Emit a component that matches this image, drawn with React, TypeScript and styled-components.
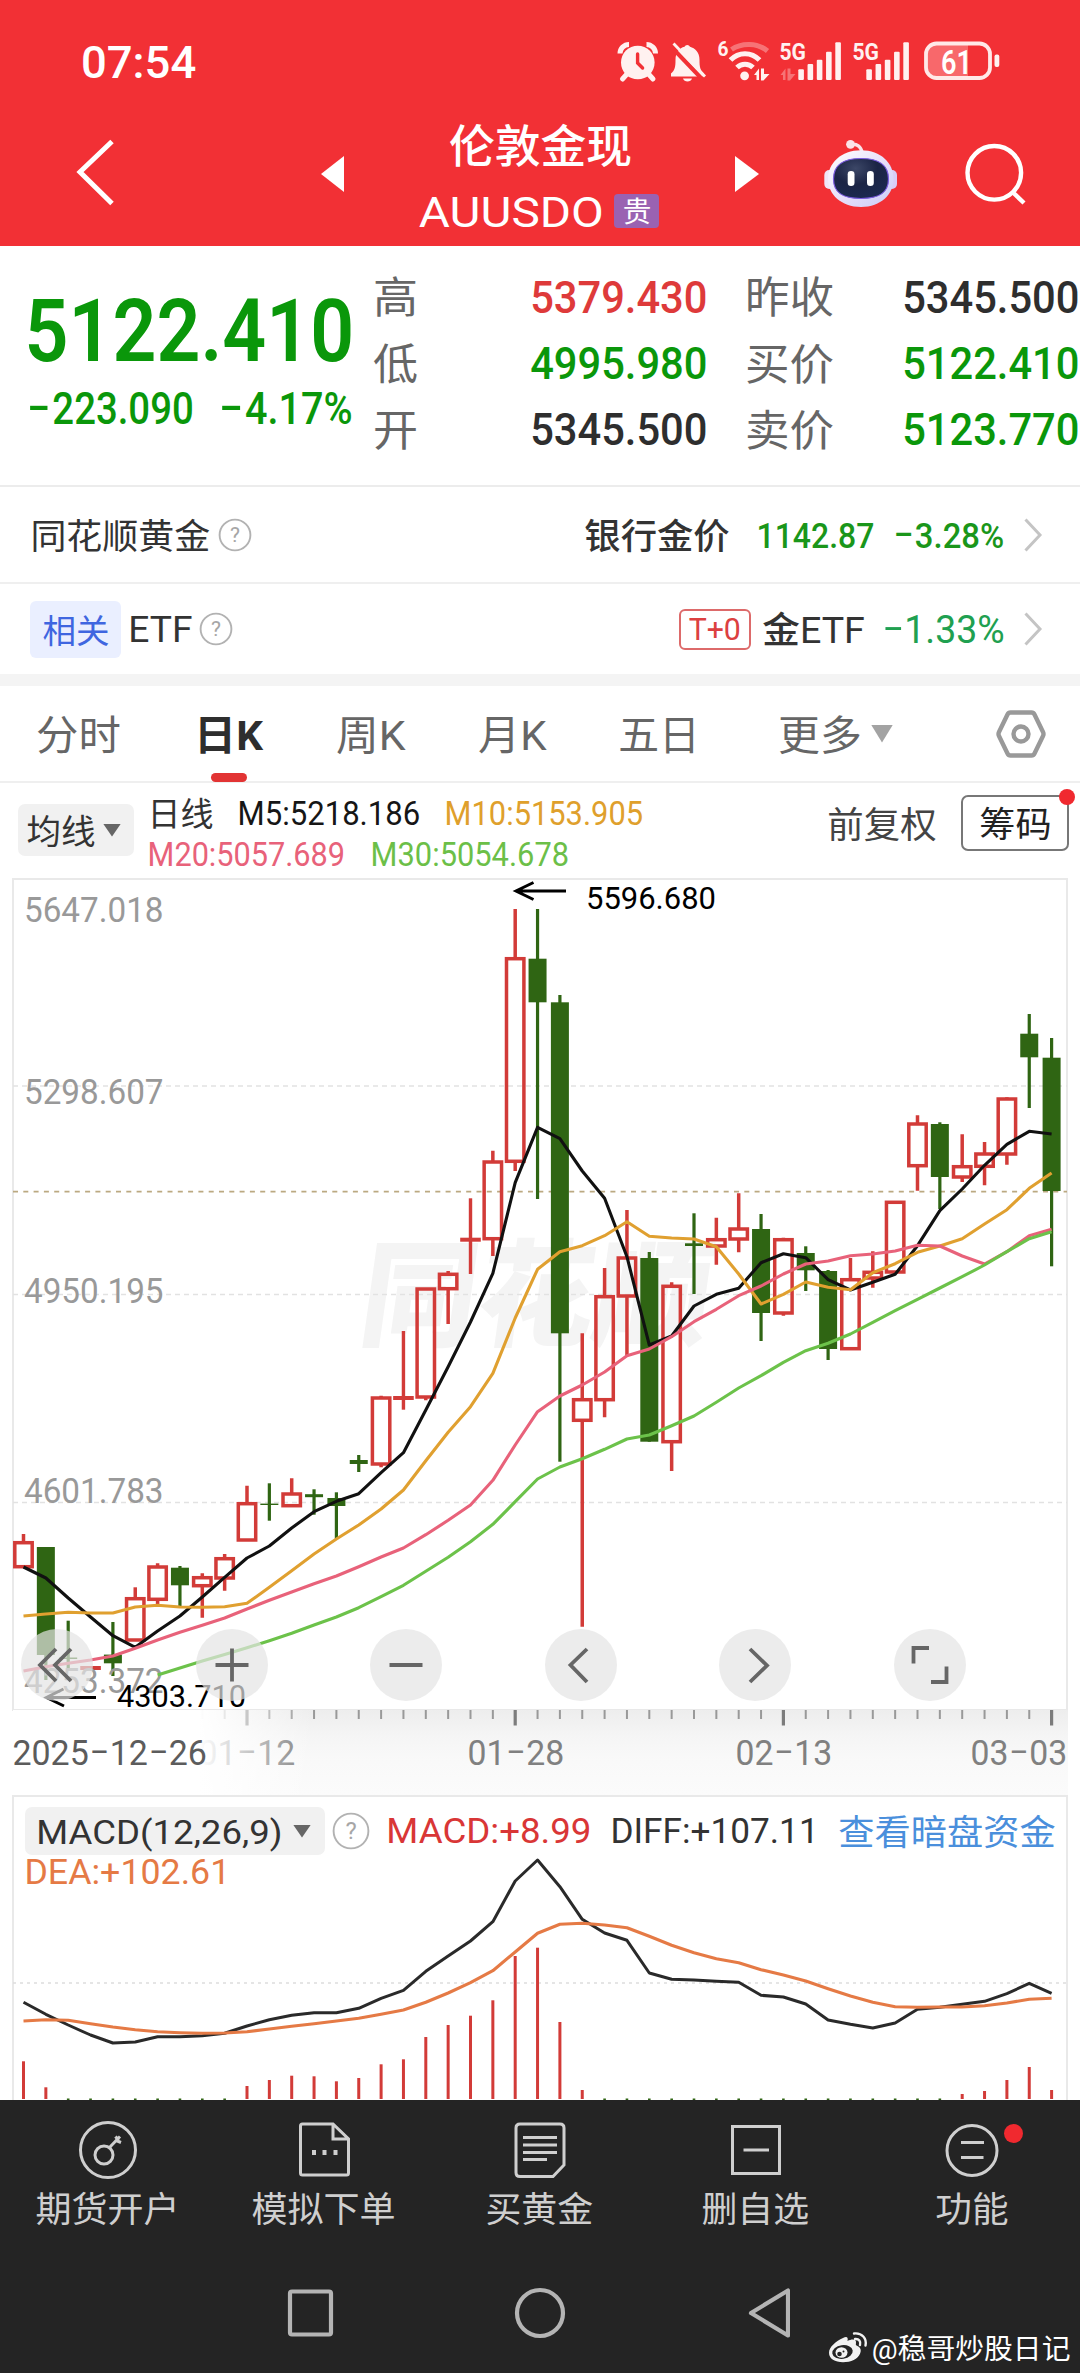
import React, { useLayoutEffect, useRef, useState } from "react";
import styled, { createGlobalStyle, css } from "styled-components";

const GlobalStyle = createGlobalStyle`
  *, *::before, *::after { box-sizing: border-box; }
  body {
    margin: 0;
    background: #ffffff;
    font-family: Roboto, "Noto Sans CJK SC", sans-serif;
  }
  svg { display: block; flex: none; }
`;

/* ---------- text fitted to a fixed ink width ---------- */

const FitBox = styled.span<{ $w: number; $ml?: number; $lh: number }>`
  display: block;
  flex: none;
  position: relative;
  width: ${(p) => p.$w}px;
  margin-left: ${(p) => p.$ml ?? 0}px;
  height: ${(p) => p.$lh}px;
  white-space: nowrap;
`;

const FitInner = styled.span<{ $size: number; $weight: number; $color: string; $lh: number }>`
  display: inline-block;
  transform-origin: 0 50%;
  font-size: ${(p) => p.$size}px;
  font-weight: ${(p) => p.$weight};
  color: ${(p) => p.$color};
  line-height: ${(p) => p.$lh}px;
`;

const Dash = styled.span`
  display: inline-block;
  transform: translateY(-0.06em) scaleX(1.75);
  margin: 0 0.17em;
`;

type FitProps = {
  text: string;
  w: number;
  size: number;
  weight?: number;
  color?: string;
  ml?: number;
  lh?: number;
};

function Fit({ text, w, size, weight = 400, color = "#333333", ml, lh }: FitProps) {
  const ref = useRef<HTMLSpanElement>(null);
  const [scale, setScale] = useState(1);
  const bearing = size * 0.045;
  const drop = /[\u4e00-\u9fff]/.test(text) ? 1.5 : 0.5;
  useLayoutEffect(() => {
    if (ref.current) setScale(w / (ref.current.offsetWidth - bearing * 2));
  }, [w, bearing, text]);
  const height = lh ?? Math.round(size * 1.3);
  return (
    <FitBox $w={w} $ml={ml} $lh={height}>
      <FitInner
        ref={ref}
        $size={size}
        $weight={weight}
        $color={color}
        $lh={height}
        style={{ transform: `translate(${-bearing * scale}px, ${drop}px) scaleX(${scale})` }}
      >
        {text.split("-").map((part, i) => (
          <React.Fragment key={i}>
            {i > 0 && <Dash>-</Dash>}
            {part}
          </React.Fragment>
        ))}
      </FitInner>
    </FitBox>
  );
}

/* ---------- layout parts ---------- */

const Screen = styled.main`
  width: 1080px;
  height: 2373px;
  overflow: hidden;
  background: #ffffff;
  display: flex;
  flex-direction: column;
`;

const Header = styled.header`
  height: 246px;
  flex: none;
  background: #f23035;
`;

const StatusBar = styled.div`
  height: 122px;
  display: flex;
  align-items: center;
  padding-left: 83px;
`;

const TitleBar = styled.div`
  height: 104px;
  display: flex;
  align-items: center;
  padding-left: 75px;
`;

const Slot = styled.div<{ $ml?: number }>`
  flex: none;
  margin-left: ${(p) => p.$ml ?? 0}px;
`;

const TitleBlock = styled.div`
  flex: none;
  width: 238px;
  margin: 8px 0 0 77px;
  display: flex;
  flex-direction: column;
  align-items: center;
`;

const TitleLine = styled.div`
  height: 66px;
  display: flex;
  align-items: center;
`;

const KindBadge = styled.span`
  margin-left: 12px;
  width: 45px;
  height: 34px;
  border-radius: 4px;
  background: #9a62b2;
  display: flex;
  align-items: center;
  justify-content: center;
`;

const Quote = styled.section`
  height: 241px;
  flex: none;
  display: flex;
  padding: 17px 0 0 28px;
  border-bottom: 2px solid #ececec;
`;

const PriceBlock = styled.div`
  width: 323px;
  flex: none;
  padding-top: 21px;
`;

const Line = styled.div`
  display: flex;
  align-items: center;
`;

const QuoteTable = styled.div`
  margin-left: 24px;
  display: grid;
  grid-auto-rows: 66.4px;
`;

const LinkRow = styled.div<{ $h: number; $border?: boolean }>`
  height: ${(p) => p.$h}px;
  flex: none;
  display: flex;
  align-items: center;
  padding: 0 37px 0 32px;
  ${(p) => p.$border && css`border-bottom: 2px solid #efefef;`}
`;

const Spacer = styled.span`
  flex: 1;
`;

const RelatedTag = styled.span`
  width: 91px;
  height: 57px;
  margin-left: -2px;
  border-radius: 6px;
  background: #eaefff;
  display: flex;
  align-items: center;
  justify-content: center;
`;

const T0Tag = styled.span`
  width: 72px;
  height: 41px;
  border: 2px solid #dd6a6a;
  border-radius: 6px;
  display: flex;
  align-items: center;
  justify-content: center;
`;

const Divider = styled.div`
  height: 12px;
  flex: none;
  background: #f4f4f4;
`;

const Tabs = styled.nav`
  height: 97px;
  flex: none;
  display: flex;
  padding-left: 38px;
  border-bottom: 2px solid #efefef;
`;

const Tab = styled.div<{ $ml?: number }>`
  margin-left: ${(p) => p.$ml ?? 0}px;
  height: 96px;
  display: flex;
  flex-direction: column;
  align-items: center;
  flex: none;
`;

const TabMark = styled.span`
  width: 36px;
  height: 9px;
  margin-top: -10px;
  border-radius: 5px;
  background: #e23434;
`;

const Triangle = styled.i<{ $w: number; $h: number; $color: string; $ml: number }>`
  flex: none;
  margin-left: ${(p) => p.$ml}px;
  width: ${(p) => p.$w}px;
  height: ${(p) => p.$h}px;
  background: ${(p) => p.$color};
  clip-path: polygon(0 0, 100% 0, 50% 100%);
`;

const MaBar = styled.div`
  height: 95px;
  flex: none;
  display: flex;
  padding-left: 18px;
`;

const PickButton = styled.div<{ $w: number; $h: number; $pad: number; $mt: number }>`
  width: ${(p) => p.$w}px;
  height: ${(p) => p.$h}px;
  margin-top: ${(p) => p.$mt}px;
  padding-left: ${(p) => p.$pad}px;
  border-radius: 7px;
  background: #f1f1f1;
  display: flex;
  align-items: center;
  flex: none;
`;

const MaLegend = styled.div`
  margin: 9px 0 0 15px;
  width: 494px;
  flex: none;
`;

const ChipButton = styled.div`
  position: relative;
  margin: 12px 0 0 26px;
  width: 108px;
  height: 56px;
  border: 2px solid #777777;
  border-radius: 7px;
  display: flex;
  align-items: center;
  justify-content: center;
`;

const RedDot = styled.i<{ $size: number; $top: number; $right: number }>`
  position: absolute;
  top: ${(p) => p.$top}px;
  right: ${(p) => p.$right}px;
  width: ${(p) => p.$size}px;
  height: ${(p) => p.$size}px;
  border-radius: 50%;
  background: #f0292f;
`;

const ChartArea = styled.section`
  position: relative;
  height: 832px;
  flex: none;
`;

const ControlRow = styled.div`
  position: absolute;
  left: 21px;
  bottom: 9px;
  display: flex;
  gap: 102.5px;
`;

const RoundButton = styled.button`
  width: 72px;
  height: 72px;
  padding: 0;
  border: 0;
  border-radius: 50%;
  background: rgba(228, 228, 228, 0.7);
  display: flex;
  align-items: center;
  justify-content: center;
`;

const Axis = styled.div`
  position: relative;
  height: 85px;
  width: 1055px;
  margin-left: 13px;
  flex: none;
  background: linear-gradient(#ededed, #f5f5f5 30%, #f9f9f9 60%, #fbfbfb);
`;

const AxisFade = styled.div`
  position: absolute;
  inset: 0 auto 0 0;
  width: 300px;
  background: linear-gradient(90deg, #fff 62%, rgba(255, 255, 255, 0));
`;

const DateRow = styled.div`
  height: 48px;
  display: flex;
  align-items: center;
  padding-left: 1px;
`;

const DateStart = styled.div`
  position: relative;
  z-index: 1;
`;

const MacdPanel = styled.section`
  position: relative;
  height: 305px;
  flex: none;
  overflow: hidden;
`;

const MacdCanvas = styled.svg`
  position: absolute;
  inset: 0;
`;

const MacdLegend = styled.div`
  position: relative;
  padding: 12px 0 0 25px;
`;

const MacdRow = styled.div`
  height: 48px;
  display: flex;
  align-items: center;
`;

const BottomBar = styled.footer`
  flex: 1;
  position: relative;
  background: #242424;
`;

const BottomTabs = styled.div`
  display: grid;
  grid-template-columns: repeat(5, 216px);
`;

const BottomTab = styled.div`
  position: relative;
  display: flex;
  flex-direction: column;
  align-items: center;
  padding: 20px 1px 0 0;
  gap: 3px;
`;

const SystemNav = styled.div`
  display: flex;
  justify-content: center;
  padding: 54px 4px 0 0;
`;

const Credit = styled.div`
  position: absolute;
  left: 828px;
  bottom: 7px;
  display: flex;
  align-items: center;
`;

/* ---------- icons ---------- */

const Bars = ({ x }: { x: number }) => (
  <g>
    {[69.3, 64, 59.7, 51.7, 42.3].map((top, i) => (
      <rect key={i} x={x + i * 9.25} y={top} width={5.6} height={80 - top} rx={1} />
    ))}
  </g>
);

const StatusIcons = () => (
  <svg width="392" height="46" viewBox="615 38 392 46" fill="#fff1f0">
    <circle cx="637.8" cy="62.5" r="16.8" />
    <path d="M620 53.5a9 9 0 0 1 9-9M646.500 44.500a9 9 0 0 1 9 9" fill="none" stroke="#fff1f0" strokeWidth="5" />
    <path d="M627 74l-4.500 5M648.500 74l4.500 5" stroke="#fff1f0" strokeWidth="5" strokeLinecap="round" />
    <path d="M637.600 54v9l5 5" fill="none" stroke="#f23035" strokeWidth="3.4" strokeLinecap="round" />
    <path d="M671 76.500v-3c4-3 4.500-7 4.500-13.500 0-8 4-12 9-13.300a3 3 0 0 1 5.500 0c5 1.300 9.500 5.500 9.500 13.300 0 6.500.5 10.500 4.500 13.500v3z" />
    <path d="M683 78.500h9c-1 4-8 4-9 0z" />
    <path d="M670.500 46L702 79" stroke="#f23035" strokeWidth="4" />
    <path d="M673.500 43.500L705 76.500" stroke="#fff1f0" strokeWidth="2.800" />
    <text x="717.500" y="56" fontSize="21" fontWeight="700" textLength="11" lengthAdjust="spacingAndGlyphs">6</text>
    <g fill="none" stroke="#fff1f0" strokeWidth="5">
      <path d="M731.500 49.500c10-7 26-7 36 1.500" opacity=".35" />
      <path d="M730.500 60c8-8.500 21-8.500 29 0" />
      <path d="M737 67.500c4.500-4.500 11.500-4.500 16 0" />
    </g>
    <circle cx="744.6" cy="75.800" r="4.400" />
    <path d="M754 75l5-6.500v11.500h-2.500V75zM761 68.500h3V74h5.500l-6 6.500H761z" />
    <text x="779.500" y="60" fontSize="24" fontWeight="700" textLength="26.500" lengthAdjust="spacingAndGlyphs">5G</text>
    <path d="M780.500 75l5-6.500v11.500H783V75zM787.500 68.500h3V74h5l-5.500 6.500h-2.500z" opacity=".35" />
    <Bars x={798.3} />
    <text x="852.500" y="60" fontSize="24" fontWeight="700" textLength="26.500" lengthAdjust="spacingAndGlyphs">5G</text>
    <Bars x={866.3} />
    <path d="M936 43h32v35h-32a10 10 0 0 1-10-10V53a10 10 0 0 1 10-10z" fill="#f8686b" />
    <rect x="926" y="43.500" width="64" height="34.500" rx="10.500" fill="none" stroke="#ffe9e8" strokeWidth="3.800" />
    <rect x="994.500" y="54.500" width="4.800" height="12.500" rx="2" />
    <text x="941" y="73.500" fontSize="34" fontWeight="600" fill="#fff" textLength="31" lengthAdjust="spacingAndGlyphs">61</text>
  </svg>
);

const Robot = () => (
  <svg width="78" height="74" viewBox="822 135 78 74">
    <defs>
      <linearGradient id="shell" x1="0" y1="0" x2="1" y2="1">
        <stop offset="0" stopColor="#ffffff" />
        <stop offset=".55" stopColor="#e6defa" />
        <stop offset="1" stopColor="#c9cdf8" />
      </linearGradient>
      <radialGradient id="visor" cx=".4" cy=".25" r=".8">
        <stop offset="0" stopColor="#3c4767" />
        <stop offset=".5" stopColor="#1b2445" />
        <stop offset="1" stopColor="#1c2a50" />
      </radialGradient>
    </defs>
    <path d="M851 142.500c6-1 10 2 11 8" fill="none" stroke="#fbe3e8" strokeWidth="3.400" />
    <circle cx="850.5" cy="142.300" r="4.400" fill="#fbe3e8" />
    <rect x="824.300" y="168" width="10" height="19" rx="5" fill="#efe6f8" />
    <rect x="886.500" y="168" width="10.500" height="19" rx="5" fill="#d9cdf6" />
    <path d="M861 148.300c20 0 32.500 13 32.500 28.500S881 205 861 205s-33-12.700-33-28.200 13-28.500 33-28.500z" fill="url(#shell)" />
    <path d="M861 156.500c17 0 27.500 5.500 27.500 20.500 0 14-9.500 19.500-27.500 19.500S833.500 191 833.500 177c0-15 10.500-20.500 27.500-20.500z" fill="url(#visor)" stroke="#7b5be0" strokeWidth="1.200" />
    <rect x="847.700" y="169" width="6.800" height="15" rx="3.300" fill="#fff" />
    <rect x="867" y="169" width="6.800" height="15" rx="3.300" fill="#fff" />
  </svg>
);

const Help = ({ r, ml }: { r: number; ml: number }) => (
  <Slot $ml={ml}>
    <svg width={r * 2 + 2} height={r * 2 + 2} viewBox={`${-r - 1} ${-r - 1} ${r * 2 + 2} ${r * 2 + 2}`}>
      <circle r={r - 0.6} fill="none" stroke="#b2b2b2" strokeWidth="1.900" />
      <text y={r * 0.46} fontSize={r * 1.32} fill="#a6a6a6" textAnchor="middle">?</text>
    </svg>
  </Slot>
);

const Chevron = () => (
  <Slot $ml={20}>
    <svg width="20" height="36" viewBox="0 0 20 36">
      <path d="M2.500 2.500L17 18 2.500 33.500" fill="none" stroke="#c4c4c4" strokeWidth="3" />
    </svg>
  </Slot>
);

/* ---------- chart data (pixel rows of the 832px-high plot, top at 878) ---------- */

type Candle = [kind: "r" | "g", high: number, top: number, bottom: number, low: number];

const candles: Candle[] = [
  ["r", 1534, 1542.7, 1566.7, 1567], ["g", 1547, 1547, 1655, 1680], ["g", 1620.7, 1657.5, 1659, 1668],
  ["r", 1668, 1668, 1668, 1668], ["g", 1622, 1654.6, 1663.3, 1676], ["r", 1587.3, 1598.7, 1640, 1640],
  ["r", 1563.3, 1567, 1599.3, 1605], ["g", 1566, 1567.7, 1585.3, 1606.7], ["r", 1573.3, 1577.7, 1585.7, 1617.7],
  ["r", 1554, 1558.7, 1578, 1590.7], ["r", 1485.7, 1503.7, 1540, 1541], ["g", 1483.3, 1503.6, 1505, 1520.7],
  ["r", 1478.3, 1494, 1505.7, 1506], ["g", 1489.3, 1494.2, 1497.2, 1514.7], ["g", 1492.3, 1498, 1506, 1538.7],
  ["g", 1455, 1460, 1464, 1472], ["r", 1395.7, 1398, 1464, 1467.3], ["r", 1331, 1398, 1398, 1409.7],
  ["r", 1288, 1289, 1397, 1400.3], ["r", 1271, 1274.3, 1288.7, 1324], ["r", 1198.3, 1239.7, 1239.7, 1274],
  ["r", 1150.7, 1162, 1238.7, 1256], ["r", 909, 958.7, 1161.3, 1171], ["g", 909, 958.7, 1002.3, 1199],
  ["g", 995, 1002.3, 1333.3, 1461.7], ["r", 1333.3, 1399.7, 1420.3, 1626.7], ["r", 1268, 1296.7, 1399.7, 1417.3],
  ["r", 1210, 1258, 1296, 1356], ["g", 1252, 1258, 1441.7, 1441.7], ["r", 1282.3, 1286.3, 1441.7, 1471],
  ["g", 1213.3, 1243.3, 1246, 1294], ["r", 1217.7, 1239.7, 1246, 1264.7], ["r", 1193.3, 1229, 1239, 1252.3],
  ["g", 1214, 1229, 1313, 1341], ["r", 1237.7, 1239.7, 1313, 1315.7], ["g", 1246.3, 1253, 1270.3, 1291],
  ["g", 1270, 1271, 1349, 1360], ["r", 1258, 1279.7, 1348.7, 1349], ["r", 1251.3, 1272.3, 1278, 1287.7],
  ["r", 1201.5, 1202.3, 1272, 1272], ["r", 1115.3, 1124, 1165.7, 1190.7], ["g", 1122.3, 1124, 1177, 1209],
  ["r", 1134.3, 1166.7, 1177, 1182], ["r", 1142, 1154, 1166.3, 1185.3], ["r", 1097.3, 1099, 1154, 1164.7],
  ["g", 1014, 1033.7, 1057.3, 1108], ["g", 1038, 1057.7, 1191, 1266.3],
];

const ma5 = [1567, 1578, 1598, 1617, 1635.7, 1647.3, 1631, 1616, 1597, 1577.3, 1558, 1546, 1528, 1511.7, 1501.3, 1493.7, 1472.7, 1452.7, 1410, 1366.7, 1322, 1273.3, 1182.7, 1127.3, 1138.7, 1171, 1198.3, 1256.7, 1345, 1336, 1306, 1294.3, 1288.3, 1262.7, 1253.7, 1257.7, 1279.7, 1290, 1282.3, 1274.3, 1245.7, 1210.7, 1189, 1165.3, 1144.3, 1131.3, 1134];
const ma10 = [1616, 1614, 1612.3, 1613, 1613, 1607, 1605.3, 1607, 1607.3, 1606.7, 1603.3, 1587.3, 1570.7, 1554, 1539, 1525, 1509, 1490, 1460.7, 1432.3, 1406.7, 1373.3, 1318, 1269.3, 1251.7, 1245.7, 1235.7, 1221.7, 1236.3, 1238, 1239, 1246.7, 1274, 1304, 1294.3, 1282, 1287.3, 1289.7, 1272.7, 1263.7, 1252.3, 1246, 1238.7, 1224, 1209.7, 1188.3, 1173];
const ma20 = [1671, 1666.7, 1663.3, 1660, 1656, 1648.3, 1640, 1632.3, 1625.3, 1618, 1609, 1600.3, 1592, 1583.7, 1576, 1566.7, 1557, 1548, 1534.7, 1520.3, 1505, 1480.3, 1445, 1411.7, 1396, 1385, 1372, 1355.7, 1349, 1336.7, 1321.7, 1309.3, 1295.7, 1286, 1274, 1264, 1261, 1255.7, 1254, 1251, 1245.3, 1246, 1256, 1264, 1251.7, 1235.7, 1229.3];
const ma30 = [1675, 1668, 1661, 1654.500, 1647.7, 1640.7, 1633.3, 1625, 1617, 1607.7, 1596.7, 1585.3, 1571.3, 1557.3, 1541.7, 1524.3, 1501.7, 1479, 1467, 1458.7, 1449.3, 1439, 1435, 1425.7, 1416, 1402.3, 1388, 1375.7, 1362.3, 1350.7, 1343.3, 1334, 1322.3, 1310.7, 1299.3, 1288, 1276.7, 1265, 1251.7, 1238.7, 1231.7];

const diff = [2002.3, 2014.3, 2025, 2035, 2043, 2042, 2036.7, 2036.7, 2035.7, 2033.3, 2026, 2019.7, 2015.3, 2012.7, 2012.7, 2008.3, 1998.3, 1990.3, 1971.3, 1956, 1941, 1921.7, 1881, 1860, 1886.7, 1919.3, 1933, 1940.3, 1973, 1979.3, 1980, 1981.3, 1982.3, 1995.3, 1997, 2004, 2020, 2024.3, 2028, 2023, 2009.3, 2007.3, 2004.3, 2001.3, 1993.7, 1983.3, 1993.3];
const dea = [2021, 2019.7, 2020.3, 2023.7, 2027, 2029.7, 2031.7, 2032.7, 2033.3, 2033, 2031.7, 2029, 2026.3, 2023.7, 2021, 2018.3, 2014.3, 2010, 2002.3, 1993, 1982.7, 1970.7, 1952, 1933.3, 1924.3, 1923.3, 1925, 1927.7, 1936.3, 1945.3, 1952.7, 1958.7, 1962.7, 1969.7, 1975, 1981, 1988.7, 1996, 2002.3, 2006.7, 2007.3, 2007, 2007, 2005.7, 2003, 1999.3, 1998.3];
const bars: Record<number, number> = { 0: 2061.3, 1: 2087.3, 11: 2080, 10: 2086, 12: 2075.7, 13: 2076.3, 14: 2081.3, 15: 2078, 16: 2064.3, 17: 2059.3, 18: 2037, 19: 2025, 20: 2015.7, 21: 2000.3, 22: 1956, 23: 1947.7, 24: 2022, 25: 2090, 42: 2094, 43: 2091, 44: 2080, 45: 2067, 46: 2090 };

const cx = (i: number) => 23.5 + 22.35 * i;
const points = (ys: number[], from = 0) => ys.map((y, i) => `${cx(i + from)},${y}`).join(" ");

const RED = "#d23b38";
const GREEN = "#2f6513";

const Stick = ({ i, candle: [kind, high, top, bottom, low] }: { i: number; candle: Candle }) => {
  const x = cx(i);
  if (kind === "g")
    return (
      <g fill={GREEN}>
        <rect x={x - 1.6} y={high} width={3.2} height={low - high} />
        <rect x={x - 9} y={top} width={18} height={bottom - top} />
      </g>
    );
  if (top === bottom)
    return (
      <g fill={RED}>
        <rect x={x - 1.7} y={high} width={3.4} height={low - high} />
        <rect x={x - 10.3} y={top - 2} width={20.6} height={4} />
      </g>
    );
  return (
    <g stroke={RED} strokeWidth={3.5} fill="none">
      <path d={`M${x} ${high}V${top}M${x} ${bottom}V${low}`} />
      <rect x={x - 8.7} y={top} width={17.4} height={bottom - top} />
    </g>
  );
};

const PriceChart = () => (
  <svg width="1080" height="833" viewBox="0 878 1080 833">
    <g transform="translate(356 1337) skewX(-8)">
      <text fontSize="116" fontWeight="900" fill="#f4f4f4" textLength="350" lengthAdjust="spacingAndGlyphs">同花顺</text>
    </g>
    <rect x="13" y="879" width="1054" height="831" fill="none" stroke="#e9e9e9" strokeWidth="2" />
    {[1086, 1294.5, 1502.500].map((y) => (
      <path key={y} d={`M13 ${y}H1067`} stroke="#e2e2e2" strokeWidth="1.300" strokeDasharray="5 4" />
    ))}
    <path d="M13 1191.700H1067" stroke="#bba981" strokeWidth="1.700" strokeDasharray="5 5.300" />
    {candles.map((c, i) => (
      <Stick key={i} i={i} candle={c} />
    ))}
    <g fontSize="35.500" fontWeight="450" fill="#999999">
      {([["5647.018", 921.5], ["5298.607", 1103.500], ["4950.195", 1303], ["4601.783", 1502.500], ["4253.372", 1693]] as const).map(([t, y]) => (
        <text key={t} x="24" y={y} textLength="139.500" lengthAdjust="spacingAndGlyphs">{t}</text>
      ))}
    </g>
    <g fill="none" strokeWidth="3.100" strokeLinejoin="round">
      <polyline points={points(ma5)} stroke="#111111" />
      <polyline points={points(ma10)} stroke="#e0a030" />
      <polyline points={points(ma20)} stroke="#e8627a" />
      <polyline points={points(ma30, 6)} stroke="#6cc24a" />
    </g>
    <g fill="none" stroke="#000" strokeWidth="3">
      <path d="M566 891H516M533.500 882.500L516 891l17.500 8.500" />
      <path d="M96 1697.500H46.500M63.500 1689L46.500 1697.500l17.500 8.500" />
    </g>
    <g fontSize="31" fill="#000">
      <text x="586" y="908.500" textLength="130" lengthAdjust="spacingAndGlyphs">5596.680</text>
      <text x="117" y="1706.500" textLength="129" lengthAdjust="spacingAndGlyphs">4303.710</text>
    </g>
  </svg>
);

const controlPaths = [
  "M35 20L19 36l16 16M50 20L34 36l16 16",
  "M19.500 36h33M36 19.500v33",
  "M19.500 36h33",
  "M42 20L25.500 36 42 53",
  "M31 20l17 16.500L31 53",
  "M35 19H19.500v15.500M37 53h15.500V37.500",
];

const AxisTicks = () => (
  <svg width="1055" height="18" viewBox="13 1711 1055 18">
    {candles.map((_, i) => {
      const major = i > 9 && (i - 10) % 12 === 0;
      return (
        <rect key={i} x={cx(i) - (major ? 1.6 : 1)} y="1711" width={major ? 3.2 : 2} height={major ? 15.500 : 9} fill={major ? "#7c7c7c" : "#999999"} />
      );
    })}
  </svg>
);

const MacdChart = () => (
  <MacdCanvas width="1080" height="305" viewBox="0 1795 1080 305">
    <path d="M13 2100V1796H1067V2100" fill="none" stroke="#e9e9e9" strokeWidth="2" />
    <path d="M13 1983H1067" stroke="#dddddd" strokeWidth="1.300" strokeDasharray="3 4" />
    {candles.map((_, i) =>
      bars[i] ? (
        <rect key={i} x={cx(i) - 1.500} y={bars[i]} width="3" height={2099 - bars[i]} fill={RED} />
      ) : (
        <rect key={i} x={cx(i) - 1.300} y="2098.500" width="2.600" height="2" fill={GREEN} />
      ),
    )}
    <polyline points={points(diff)} fill="none" stroke="#2a2a2a" strokeWidth="3" strokeLinejoin="round" />
    <polyline points={points(dea)} fill="none" stroke="#e57a45" strokeWidth="3.100" strokeLinejoin="round" />
  </MacdCanvas>
);

/* ---------- bottom icons, on a 60x62 grid ---------- */

const bottomItems = [
  {
    label: "期货开户", w: 141,
    icon: (
      <>
        <circle cx="30" cy="30" r="27.500" />
        <circle cx="26" cy="35" r="9" />
        <path d="M31.500 27.500L42 16.500M37 20l6 2.500M37.500 16.500l3 4" />
      </>
    ),
  },
  {
    label: "模拟下单", w: 141,
    icon: (
      <>
        <path d="M39 4H8.500q-2 0-2 2v47q0 2 2 2h44q2 0 2-2V19zM39 4v15h15" />
        <path d="M18 32.500h4M28.500 32.500h4M39.500 32.500h4" strokeWidth="5" />
      </>
    ),
  },
  {
    label: "买黄金", w: 105,
    icon: (
      <>
        <path d="M10 4h40q4 0 4 4v37L43 56.500H10q-4 0-4-4V8q0-4 4-4z" />
        <path d="M13 17.500h34M13 25h34M13 32.500h34M13 39.500h24" />
      </>
    ),
  },
  {
    label: "删自选", w: 105,
    icon: (
      <>
        <rect x="6.500" y="6.500" width="47" height="47" />
        <path d="M17.500 30h25.500" />
      </>
    ),
  },
  {
    label: "功能", w: 70,
    icon: (
      <>
        <circle cx="30" cy="30.500" r="25" />
        <path d="M19 22.500h23M19 37.500h22.500" />
      </>
    ),
  },
];

const quoteRows = [
  ["高", "5379.430", "#de3a3a", "昨收", "5345.500", "#2e2e2e"],
  ["低", "4995.980", "#0a970a", "买价", "5122.410", "#0a970a"],
  ["开", "5345.500", "#2e2e2e", "卖价", "5123.770", "#0a970a"],
];

export default function App() {
  return (
    <Screen>
      <GlobalStyle />
      <Header>
        <StatusBar>
          <Fit text="07:54" w={111} size={45} weight={500} color="#ffffff" />
          <Slot $ml={421}>
            <StatusIcons />
          </Slot>
        </StatusBar>
        <TitleBar>
          <svg width="40" height="70" viewBox="0 0 40 70">
            <path d="M37 2.500L5 33l32 31.500" fill="none" stroke="#fff" strokeWidth="5" />
          </svg>
          <Slot $ml={206}>
            <svg width="23" height="36" viewBox="0 0 23 36"><path d="M23 0v36L0 18z" fill="#fff" /></svg>
          </Slot>
          <TitleBlock>
            <TitleLine><Fit text="伦敦金现" w={179} size={45} weight={500} color="#ffffff" /></TitleLine>
            <TitleLine>
              <Fit text="AUUSDO" w={181} size={43} color="#ffffff" />
              <KindBadge><Fit text="贵" w={26} size={28} lh={32} color="#ffffff" /></KindBadge>
            </TitleLine>
          </TitleBlock>
          <Slot $ml={76}>
            <svg width="24" height="36" viewBox="0 0 24 36"><path d="M0 0v36L24 18z" fill="#fff" /></svg>
          </Slot>
          <Slot $ml={63}><Robot /></Slot>
          <Slot $ml={63}>
            <svg width="66" height="66" viewBox="963 141 66 66" fill="none" stroke="#fff" strokeWidth="4.400">
              <circle cx="994.300" cy="172.800" r="26.800" />
              <path d="M1012.500 192L1024 203" />
            </svg>
          </Slot>
        </TitleBar>
      </Header>

      <Quote>
        <PriceBlock>
          <Fit text="5122.410" w={323} size={87} lh={92} weight={600} color="#0a970a" />
          <Line>
            <Fit text="-223.090" w={164} size={43.5} lh={66} weight={500} color="#0a970a" />
            <Fit text="-4.17%" w={131} ml={28} size={43.5} lh={66} weight={500} color="#0a970a" />
          </Line>
        </PriceBlock>
        <QuoteTable>
          {quoteRows.map(([a, av, ac, b, bv, bc]) => (
            <Line key={a}>
              <Fit text={a} w={41} size={43} color="#666666" />
              <Fit text={av} w={174} ml={116} size={45} weight={500} color={ac} />
              <Fit text={b} w={85} ml={41} size={43} color="#666666" />
              <Fit text={bv} w={174} ml={72} size={45} weight={500} color={bc} />
            </Line>
          ))}
        </QuoteTable>
      </Quote>

      <LinkRow $h={97} $border>
        <Fit text="同花顺黄金" w={177} size={35.5} />
        <Help r={16} ml={9} />
        <Spacer />
        <Fit text="银行金价" w={142} size={35.5} weight={450} />
        <Fit text="1142.87" w={115} ml={30} size={35.5} weight={500} color="#1a961a" />
        <Fit text="-3.28%" w={109} ml={21} size={35.5} weight={500} color="#1a961a" />
        <Chevron />
      </LinkRow>
      <LinkRow $h={90}>
        <RelatedTag><Fit text="相关" w={64} size={33} color="#3f66e0" /></RelatedTag>
        <Fit text="ETF" w={61} ml={9} size={37} />
        <Help r={16} ml={8} />
        <Spacer />
        <T0Tag><Fit text="T+0" w={50} size={31} lh={36} color="#dc4040" /></T0Tag>
        <Fit text="金ETF" w={99} ml={13} size={36} weight={450} />
        <Fit text="-1.33%" w={120} ml={20} size={38.5} color="#20a050" />
        <Chevron />
      </LinkRow>
      <Divider />

      <Tabs>
        <Tab><Fit text="分时" w={81} size={41} lh={97} color="#666666" /></Tab>
        <Tab $ml={77}>
          <Fit text="日K" w={65} size={41} lh={97} weight={700} color="#2e2e2e" />
          <TabMark />
        </Tab>
        <Tab $ml={77}><Fit text="周K" w={66} size={41} lh={97} color="#666666" /></Tab>
        <Tab $ml={76}><Fit text="月K" w={65} size={41} lh={97} color="#666666" /></Tab>
        <Tab $ml={75}><Fit text="五日" w={78} size={41} lh={97} color="#666666" /></Tab>
        <Tab $ml={82}><Fit text="更多" w={80} size={41} lh={97} color="#666666" /></Tab>
        <Line>
          <Triangle $w={22} $h={18} $color="#a3a3a3" $ml={11} />
          <Slot $ml={102}>
            <svg width="52" height="50" viewBox="0 0 52 50" fill="none" stroke="#999999" strokeWidth="4.400">
              <path d="M15.500 3.500h21q2 0 3 2L48 23q1 2 0 4l-8.500 17.500q-1 2-3 2h-21q-2 0-3-2L4 27q-1-2 0-4l8.500-17.500q1-2 3-2z" />
              <circle cx="26" cy="25" r="7.500" />
            </svg>
          </Slot>
        </Line>
      </Tabs>

      <MaBar>
        <PickButton $w={116} $h={52} $pad={10} $mt={21}>
          <Fit text="均线" w={66} size={34} color="#333333" />
          <Triangle $w={18} $h={13} $color="#666666" $ml={9} />
        </PickButton>
        <MaLegend>
          <Line>
            <Fit text="日线" w={63} size={33} lh={41} />
            <Fit text="M5:5218.186" w={180} ml={27} size={33.5} lh={41} weight={450} color="#161616" />
            <Fit text="M10:5153.905" w={196} ml={27} size={33.5} lh={41} weight={450} color="#dfa02c" />
          </Line>
          <Line>
            <Fit text="M20:5057.689" w={195} size={33.5} lh={41} weight={450} color="#e8627a" />
            <Fit text="M30:5054.678" w={196} ml={28} size={33.5} lh={41} weight={450} color="#6cbf48" />
          </Line>
        </MaLegend>
        <Fit text="前复权" w={106} ml={186} size={36} lh={83} color="#444444" />
        <ChipButton>
          <Fit text="筹码" w={69} size={35.5} color="#222222" />
          <RedDot $size={16} $top={-8} $right={-8} />
        </ChipButton>
      </MaBar>

      <ChartArea>
        <PriceChart />
        <ControlRow>
          {controlPaths.map((d) => (
            <RoundButton key={d}>
              <svg width="72" height="72" viewBox="0 0 72 72">
                <path d={d} fill="none" stroke="#666666" strokeWidth="3.800" />
              </svg>
            </RoundButton>
          ))}
        </ControlRow>
      </ChartArea>

      <Axis>
        <AxisTicks />
        <DateRow>
          <DateStart><Fit text="2025-12-26" w={191} size={35.5} weight={450} color="#5c5c5c" /></DateStart>
          <Fit text="01-12" w={94} ml={-5} size={35.5} weight={450} color="#808080" />
          <Fit text="01-28" w={94} ml={175} size={35.5} weight={450} color="#808080" />
          <Fit text="02-13" w={94} ml={174} size={35.5} weight={450} color="#808080" />
          <Fit text="03-03" w={94} ml={141} size={35.5} weight={450} color="#808080" />
        </DateRow>
        <AxisFade />
      </Axis>

      <MacdPanel>
        <MacdChart />
        <MacdLegend>
          <MacdRow>
            <PickButton $w={300} $h={48} $pad={13} $mt={0}>
              <Fit text="MACD(12,26,9)" w={243} size={34} color="#333333" weight={450} />
              <Triangle $w={18} $h={13} $color="#666666" $ml={12} />
            </PickButton>
            <Help r={18} ml={7} />
            <Fit text="MACD:+8.99" w={202} ml={18} size={35} weight={450} color="#d93636" />
            <Fit text="DIFF:+107.11" w={205} ml={22} size={35} weight={450} color="#333333" />
            <Fit text="查看暗盘资金" w={214} ml={23} size={35.5} color="#4a8fdc" />
          </MacdRow>
          <Fit text="DEA:+102.61" w={203} ml={1} size={35} lh={34} weight={450} color="#e57a45" />
        </MacdLegend>
      </MacdPanel>

      <BottomBar>
        <BottomTabs>
          {bottomItems.map((item, i) => (
            <BottomTab key={item.label}>
              <svg width="60" height="62" viewBox="0 0 60 62" fill="none" stroke="#cfcfcf" strokeWidth="3">
                {item.icon}
              </svg>
              <Fit text={item.label} w={item.w} size={35.5} color="#cfcfcf" />
              {i === 4 && <RedDot $size={19} $top={24} $right={57} />}
            </BottomTab>
          ))}
        </BottomTabs>
        <SystemNav>
          <svg width="504" height="56" viewBox="286 2286 504 56" fill="none" stroke="#b4b4b4" strokeWidth="4.200" strokeLinejoin="round">
            <rect x="290" y="2292.500" width="41" height="43" rx="2" />
            <circle cx="540" cy="2314" r="23" />
            <path d="M788 2291.500v45L751 2314z" />
          </svg>
        </SystemNav>
        <Credit>
          <svg width="40" height="34" viewBox="827 2329 40 34">
            <path d="M842 2336c3.500-2 5.500-1 4.500 3 4-2 9-2.500 8.500 2-.2 1.500-.5 2.200 1 2.800 4 1.500 4.500 5 3 8-2 5-9 8.500-17 8.500-8 0-14-3.500-14-9.500 0-6 7-11.500 14-14.800z" fill="#f2f2f2" />
            <ellipse cx="841.500" cy="2350" rx="10.300" ry="6.800" transform="rotate(-8 841.500 2350)" fill="#242424" />
            <ellipse cx="840.500" cy="2350.500" rx="6" ry="5.300" fill="#f2f2f2" />
            <circle cx="838.500" cy="2352" r="2.300" fill="#242424" />
            <circle cx="842.500" cy="2349.500" r="1" fill="#242424" />
            <path d="M853 2331.500c8-1 13 5 11.500 12M854 2337c4-.5 6 2.500 5 6" fill="none" stroke="#f2f2f2" strokeWidth="2.400" strokeLinecap="round" />
          </svg>
          <Fit text="@稳哥炒股日记" w={196} ml={5} size={28} color="#ffffff" />
        </Credit>
      </BottomBar>
    </Screen>
  );
}
